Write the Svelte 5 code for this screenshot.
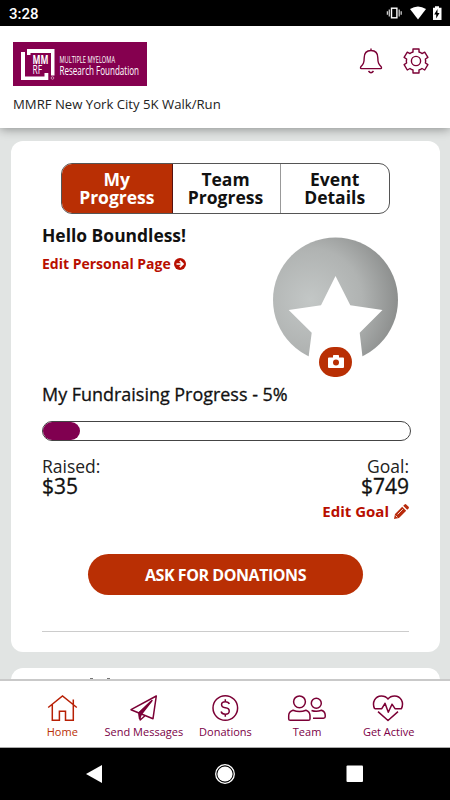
<script>
let raised = 35,
    goal = 749,
    activeTab = 0,
    activeNav = "home"

const tabs = [["My", "Progress"], ["Team", "Progress"], ["Event", "Details"]]

const navItems = [
    { id: "home", label: "Home" },
    { id: "messages", label: "Send Messages" },
    { id: "donations", label: "Donations" },
    { id: "team", label: "Team" },
    { id: "active", label: "Get Active" }
]

$: percent = Math.round(raised / goal * 100)
// The bar never gets narrower than its rounded ends
$: barWidth = Math.max(percent, 10)
</script>

<div class="screen">
    <div class="status">
        <span class="clock">3:28</span>
        <svg class="status-icons" width="56" height="16" viewBox="0 0 56 16">
            <rect x="5.500" y="3.200" width="5.400" height="9.600" fill="none" stroke="#fff" stroke-width="1.400" />
            <path d="M3.300 4.500v7M1.400 6.300v3.500M13.200 4.500v7M15.200 6.300v3.500" stroke="#ccc" stroke-width="1.300" />
            <path d="M24 4Q32 -1 40 4L32 14.500Z" fill="#fff" />
            <path d="M49 1.300h4v1.500H55.500V15h-8.500V2.800h2Z" fill="#fff" />
            <path d="M51.500 4l-3.300 5.500h2V13.500l3.300-5.600h-2Z" fill="#000" />
        </svg>
    </div>

    <header>
        <div class="brand">
            <svg class="logo" width="134" height="44" viewBox="0 0 134 44">
                <rect width="134" height="44" fill="#85004f" />
                <path d="M8 10H12V34.500H31.500V31H35.300V38H8ZM14 7H41.500V33.500H38V11H17.500V13H14Z" fill="#fff" />
                <text class="mark-bold" x="19.500" y="22" textLength="16" lengthAdjust="spacingAndGlyphs">MM</text>
                <text class="mark" x="19.500" y="32.300" textLength="9.500" lengthAdjust="spacingAndGlyphs">RF</text>
                <circle cx="39.500" cy="36" r="1.300" fill="none" stroke="#e3bfd3" stroke-width=".7" />
                <text class="line-one" x="46.500" y="20.500" textLength="55.500" lengthAdjust="spacingAndGlyphs">MULTIPLE MYELOMA</text>
                <text class="line-two" x="46.500" y="32.500" textLength="79.500" lengthAdjust="spacingAndGlyphs">Research Foundation</text>
            </svg>
            <div class="event">MMRF New York City 5K Walk/Run</div>
        </div>
        <div class="tools">
            <svg width="24" height="28" viewBox="0 0 24 28">
                <path d="M12 1.500v2M12 3.500C7.500 3.500 5.200 6.600 5.200 10.800C5.200 16 4.200 17.300 1.800 19.700Q1 21.300 2.300 21.600H21.700Q23 21.300 22.200 19.700C19.800 17.300 18.800 16 18.800 10.800C18.800 6.600 16.500 3.500 12 3.500ZM9.500 24q2.500 3.400 5 0" />
            </svg>
            <svg width="28" height="28" viewBox="0 0 28 28">
                <path d="M11 2H17V5Q18.800 5.500 20 6.600L22.700 5.200L25.900 10.400L23.400 12Q23.900 14.200 23.400 16L25.900 17.600L22.700 23L20 21.500Q18.800 22.600 17 23V26H11V23Q9.200 22.600 8 21.500L5.300 23L2.100 17.600L4.600 16Q4.100 14.200 4.600 12L2.100 10.400L5.300 5.200L8 6.600Q9.200 5.500 11 5Z" />
                <circle cx="14" cy="14" r="4.600" />
            </svg>
        </div>
    </header>

    <main>
        <section class="card">
            <div class="tabs">
                {#each tabs as tab, i}
                <button class:selected={i == activeTab} on:click={() => { activeTab = i }}>{tab[0]}<br>{tab[1]}</button>
                {/each}
            </div>

            <div class="profile">
                <div class="greeting">
                    <h1>Hello Boundless!</h1>
                    <a class="link" href="#page">Edit Personal Page
                        <svg width="12" height="12" viewBox="0 0 12 12">
                            <circle cx="6" cy="6" r="6" fill="#b80f00" />
                            <path d="M2.500 6h6M5.800 2.800L9 6 5.800 9.200" fill="none" stroke="#fff" stroke-width="1.700" />
                        </svg>
                    </a>
                </div>
                <div class="avatar">
                    <svg width="126" height="126" viewBox="0 0 126 126">
                        <defs>
                            <radialGradient id="silver" cx=".3" cy=".5" r=".75">
                                <stop offset="0" stop-color="#c3c7c6" />
                                <stop offset=".55" stop-color="#b0b3b2" />
                                <stop offset="1" stop-color="#868887" />
                            </radialGradient>
                        </defs>
                        <circle cx="62.500" cy="62.900" r="62.500" fill="url(#silver)" />
                        <path d="M62.500 39L77.300 68.300 109.500 73 86.700 95.700 90.200 126H34.800L38.700 95.700 15.700 73 48 68.300Z" fill="#fff" />
                    </svg>
                    <div class="camera">
                        <svg width="16" height="14" viewBox="0 0 16 14">
                            <path d="M1 2.500h4V.8q0-.8.8-.8h4.400q.8 0 .8.800v1.700h4q1 0 1 1V12q0 1-1 1H1q-1 0-1-1V3.500q0-1 1-1Z" fill="#fff" />
                            <circle cx="8" cy="7.500" r="3" fill="#b92f04" />
                        </svg>
                    </div>
                </div>
            </div>

            <h2>My Fundraising Progress - {percent}%</h2>
            <div class="bar">
                <div class="fill" style="width: {barWidth}%"></div>
            </div>

            <div class="totals">
                <div>
                    <div class="caption">Raised:</div>
                    <div class="amount">${raised}</div>
                </div>
                <div class="right">
                    <div class="caption">Goal:</div>
                    <div class="amount">${goal}</div>
                    <a class="link goal-link" href="#goal">Edit Goal
                        <svg width="15" height="15" viewBox="0 0 15 15">
                            <path d="M0 15L1 10L8.200 2.800 12.200 6.800 5 14ZM9.200 1.800L10.600.4q.8-.7 1.600 0L14.600 2.800q.7.800 0 1.600L13.200 5.800Z" fill="#b82b0c" />
                            <path d="M3.600 10.400L8.800 5.200M1.600 11.600l1.800 1.800" stroke="#fff" stroke-width=".8" />
                        </svg>
                    </a>
                </div>
            </div>

            <button class="ask">ASK FOR DONATIONS</button>
            <hr>
        </section>
        <section class="card next">
            <i></i><i></i>
        </section>
    </main>

    <nav>
        {#each navItems as item}
        <button class:current={item.id == activeNav} on:click={() => { activeNav = item.id }}>
            <svg width="40" height="28" viewBox="0 0 40 28">
                {#if item.id == "home"}
                <path d="M6.200 13.500L20.500 1.900 34.800 13.500M10.300 10.800V26.200H17.400V17.200H23.500V26.200H31.300V5.500" />
                {:else if item.id == "messages"}
                <path d="M33.300 2L8 15.700 30 24.700ZM28 7.500L16 18.800 17.200 26 22 21.700" />
                <path d="M29 6.500L16 19 16.500 24.500 18.500 20Z" fill="#7b0046" />
                {:else if item.id == "donations"}
                <circle cx="20.300" cy="14" r="12.300" />
                <path d="M24.300 10Q23.500 7.800 20.300 7.800C15.300 7.800 15.300 13.300 20.300 13.800C25.800 14.400 25.300 20.200 20.300 20.200Q16.800 20.200 16.100 17.500M20.300 5.300v2.500M20.300 20.200v2.500" />
                {:else if item.id == "team"}
                <circle cx="12.500" cy="7.800" r="5.900" />
                <circle cx="29.300" cy="9.200" r="5" />
                <path d="M6 16.200Q12.500 19 19 16.200Q22.800 17.500 23 21.500V25Q23 26.300 21.500 26.300H3.200Q1.700 26.300 1.700 25V21.500Q1.800 17.500 6 16.200ZM24.500 16.500Q29.500 18.300 34.500 16.300Q38 17.500 38.200 21V22.800Q38.200 24.200 36.500 24.200H26" />
                {:else}
                <path d="M6.600 14.700C3.500 8 7.500 1.900 13.300 1.900Q17.800 1.900 20 5Q22.200 1.900 26.700 1.900C32.500 1.900 36.500 8 33.400 14.700H27L24 10.200 20.300 18.300 17 9.300 13.800 14.700H6.600M10 17.600L20 26.500 30 17.600" />
                {/if}
            </svg>
            <span>{item.label}</span>
        </button>
        {/each}
    </nav>

    <div class="system">
        <svg width="18" height="20" viewBox="0 0 18 20"><path d="M0 10L16 1V19Z" fill="#fff" /></svg>
        <svg width="22" height="22" viewBox="0 0 22 22">
            <circle cx="11" cy="11" r="9.300" fill="none" stroke="#fff" stroke-width="1.300" />
            <circle cx="11" cy="11" r="7.600" fill="#fff" />
        </svg>
        <svg width="18" height="18" viewBox="0 0 18 18"><rect x=".5" y=".5" width="16.500" height="16.500" rx="1" fill="#fff" /></svg>
    </div>
</div>

<style>
:global(body) {
    margin: 0;
    background: #000;
}
.screen {
    display: flex;
    flex-direction: column;
    width: 450px;
    height: 800px;
    overflow: hidden;
    font-family: "Open Sans", "Noto Sans", sans-serif;
    color: #111;
}
button {
    margin: 0;
    padding: 0;
    border: 0;
    background: none;
    font-family: inherit;
    color: inherit;
}
.status {
    display: flex;
    justify-content: space-between;
    height: 26px;
    flex: none;
    background: #000;
    color: #fff;
}
.clock {
    margin-left: 9px;
    font: 500 15px/28px Roboto, sans-serif;
}
.status-icons {
    margin: 5px 8px 0 0;
}
header {
    position: relative;
    display: flex;
    justify-content: space-between;
    box-sizing: border-box;
    height: 102px;
    flex: none;
    padding: 16px 20px 0 13px;
    background: #fff;
    box-shadow: 0 1px 10px rgba(0, 0, 0, .4);
}
.logo {
    display: block;
}
.logo text {
    fill: #fff;
    font-family: "Open Sans", sans-serif;
}
.logo .mark-bold {
    font-size: 13px;
    font-weight: 700;
}
.logo .mark {
    font-size: 13px;
}
.logo .line-one {
    font-size: 9.5px;
}
.logo .line-two {
    font-size: 13.5px;
}
.event {
    margin-top: 9px;
    font-size: 13.15px;
    line-height: 18px;
    white-space: nowrap;
    color: #222;
}
.tools {
    display: flex;
    gap: 19px;
    margin-top: 5px;
}
.tools svg {
    fill: none;
    stroke: #7b0035;
    stroke-width: 1.4;
    stroke-linejoin: round;
}
main {
    flex: 1;
    overflow: hidden;
    padding: 13px 10px 0 11px;
    background: #e1e4e3;
}
.card {
    box-sizing: border-box;
    height: 511px;
    padding: 22px 31px 0;
    border-radius: 12px;
    background: #fff;
}
.tabs {
    display: flex;
    box-sizing: border-box;
    width: 329px;
    height: 51px;
    margin-left: 19px;
    border: 1px solid #555;
    border-radius: 11px;
    overflow: hidden;
}
.tabs button {
    width: 109px;
    border-left: 1px solid #999;
    font-size: 17.5px;
    font-weight: 700;
    line-height: 17.5px;
}
.tabs button:first-child {
    width: 110px;
    border-left: 0;
}
.tabs button:nth-child(2) {
    border-left-color: #511;
    padding-right: 2px;
}
.tabs button:nth-child(3) {
    padding-right: 1px;
}
.tabs .selected {
    background: #b92f04;
    color: #fff;
}
.profile {
    display: flex;
    justify-content: space-between;
    height: 164px;
}
h1 {
    margin: 10px 0 8px;
    font-size: 17.45px;
    font-weight: 700;
    line-height: 22px;
}
.link {
    display: flex;
    align-items: center;
    gap: 3px;
    color: #b80f00;
    font-size: 14px;
    font-weight: 700;
    line-height: 20px;
    text-decoration: none;
}
.avatar {
    position: relative;
    width: 126px;
    height: 126px;
    margin: 23px 10px 0 0;
}
.camera {
    position: absolute;
    left: 46px;
    top: 110px;
    display: flex;
    align-items: center;
    justify-content: center;
    width: 33px;
    height: 30px;
    border-radius: 15px;
    background: #b92f04;
}
h2 {
    margin: 4px 0 0;
    font-size: 17.95px;
    font-weight: 500;
    line-height: 24px;
    -webkit-text-stroke: .3px #111;
}
.bar {
    box-sizing: border-box;
    width: 369px;
    height: 20px;
    margin-top: 15px;
    border: 1px solid #444;
    border-radius: 10px;
}
.fill {
    height: 18px;
    border-radius: 9px;
    background: #800050;
}
.totals {
    display: flex;
    justify-content: space-between;
    margin-top: 15px;
}
.right {
    text-align: right;
}
.caption {
    font-size: 17.5px;
    line-height: 20px;
    color: #222;
}
.amount {
    font-size: 21px;
    font-weight: 500;
    line-height: 20px;
    -webkit-text-stroke: .3px #111;
}
.goal-link {
    gap: 5px;
    margin-top: 5px;
    font-size: 15px;
}
.ask {
    display: block;
    width: 275px;
    height: 41px;
    margin: 33px 0 0 46px;
    border-radius: 20.5px;
    background: #b92f04;
    color: #fff;
    font-size: 16px;
    font-weight: 700;
    letter-spacing: -.44px;
}
hr {
    margin: 36px 0 0;
    border: 0;
    border-top: 1px solid #ccc;
}
.next {
    display: flex;
    gap: 14px;
    margin-top: 16px;
    padding: 10px 0 0 79px;
}
.next i {
    width: 3px;
    height: 2px;
    background: #777;
}
nav {
    position: relative;
    display: flex;
    box-sizing: border-box;
    height: 69px;
    flex: none;
    padding: 13px 21px 0;
    border-top: 2px solid #c9c9c9;
    border-bottom: 1px solid #aaa;
    background: #fff;
}
nav button {
    display: flex;
    flex-direction: column;
    align-items: center;
    justify-content: flex-start;
    gap: 2px;
    flex: 1 1 0;
    width: 0;
    color: #7b0046;
    font-size: 11px;
    line-height: 16px;
    white-space: nowrap;
}
nav svg {
    flex: none;
    fill: none;
    stroke: #7b0035;
    stroke-width: 1.5;
    stroke-linejoin: round;
}
nav span {
    padding-left: 1px;
}
nav .current {
    color: #b92f04;
}
nav .current svg {
    stroke: #b82005;
    stroke-linejoin: miter;
}
.system {
    display: flex;
    align-items: center;
    justify-content: space-between;
    box-sizing: border-box;
    height: 52px;
    flex: none;
    padding: 0 86px;
    background: #000;
}
</style>
